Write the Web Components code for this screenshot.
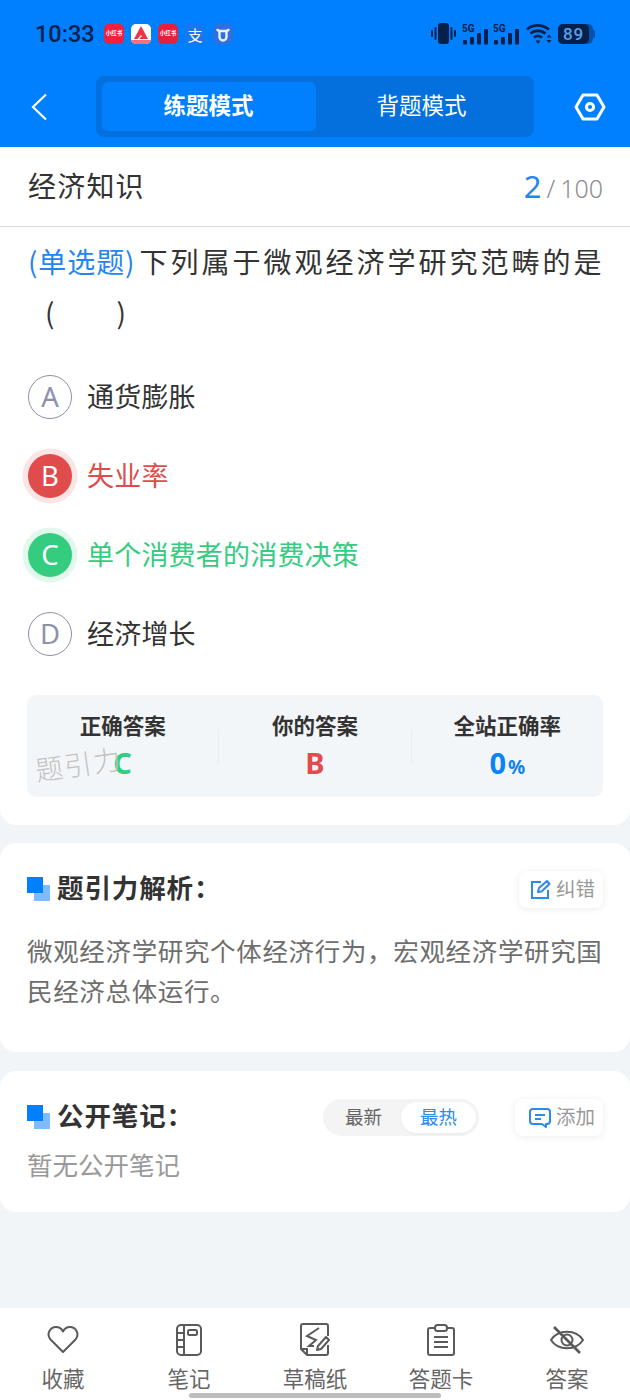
<!DOCTYPE html>
<html lang="zh"><head><meta charset="utf-8"><title>练题</title>
<style>
html,body{margin:0;padding:0}
body{width:630px;height:1400px;overflow:hidden;background:#f1f5f8;font-family:"Noto Sans CJK SC","Noto Sans",sans-serif;color:#333}
#page{display:flex;flex-direction:column;height:1400px;position:relative}
</style></head><body>
<div id="page">
<app-header></app-header>
<question-card></question-card>
<info-card style="margin-top:18px;height:209px" heading="题引力解析&#xFF1A;" action="纠错" icon="edit">
  <div style="font-size:25.5px;line-height:40px;color:#6e6e6e;letter-spacing:.66px;margin-top:23px">微观经济学研究个体经济行为&#xFF0C;宏观经济学研究国民经济总体运行。</div>
</info-card>
<info-card style="margin-top:19px;height:141px" heading="公开笔记&#xFF1A;" action="添加" icon="comment" sort>
  <div style="font-size:25.5px;line-height:36px;color:#999;margin-top:11px">暂无公开笔记</div>
</info-card>
<tab-bar></tab-bar>
</div>
<script>
class AppHeader extends HTMLElement{constructor(){super();this.attachShadow({mode:'open'}).innerHTML=`
<style>
:host{display:block;height:147px;background:#007fff;flex:none;position:relative}
.status{height:66px;box-sizing:border-box;padding:23px 35px 0 35px;display:flex;align-items:flex-start;justify-content:space-between}
.left{display:flex;align-items:center;gap:7px}
.time{font:500 23.5px/22px Roboto,sans-serif;color:#05204a;margin-right:2px;width:60px}
.app{width:20px;height:20px;border-radius:5px;display:flex;align-items:center;justify-content:center;color:#fff;font:700 5.5px/1 "Noto Sans CJK SC",sans-serif;overflow:hidden;white-space:nowrap}
.right{display:flex;align-items:center;gap:5px;height:22px}
.nav{display:flex;align-items:center;height:61px;margin-top:10px;padding:0 24px 0 29px;justify-content:space-between}
.seg{width:438px;height:61px;box-sizing:border-box;background:#0370dd;border-radius:8px;padding:6px;display:flex;margin-left:6px}
.seg div{flex:1;display:flex;align-items:center;justify-content:center;font-size:22.5px;color:#fff;border-radius:6px;padding-bottom:5px;box-sizing:border-box}
.seg .on{flex:none;width:214px;background:#007fff;font-weight:700}
svg{display:block}
</style>
<div class="status"><div class="left"><span class="time">10:33</span>
<span class="app" style="background:#f0203e">小红书</span>
<span class="app" style="background:#fff"><svg width="20" height="20" viewBox="0 0 20 20"><path d="M10 2 3 15h3.500L10 11l1.500 1.500H10L8.500 15H17z" fill="#ee3344"/><path d="M0 16h20v4H0z" fill="#f5707a"/></svg></span>
<span class="app" style="background:#e5203c">小红书</span>
<span class="app" style="background:#1876f0;font:400 15px/1 'Noto Sans CJK SC',sans-serif">支</span>
<span class="app" style="background:#2f6fe0;margin-left:1px"><svg width="14" height="15" viewBox="0 0 14 15"><path d="M1 2c1 2 2 2 6 2s5 0 6-2M3.500 4v6a3.500 3.500 0 0 0 7 0V4" fill="none" stroke="#e8f2ff" stroke-width="2.400"/></svg></span>
</div>
<div class="right">
<svg width="27" height="22" viewBox="0 0 27 22" fill="#05204a"><rect x="8" y="0" width="11" height="21" rx="3"/><rect x="1" y="7" width="2" height="7" rx="1"/><rect x="4.500" y="4" width="2" height="13" rx="1"/><rect x="20.500" y="4" width="2" height="13" rx="1"/><rect x="24" y="7" width="2" height="7" rx="1"/></svg>
<svg width="26" height="22" viewBox="0 0 26 22" fill="#05204a"><text x="0" y="8.500" font-family="Roboto,sans-serif" font-size="10" font-weight="700">5G</text><rect x="1" y="17" width="4" height="4.500" rx="1"/><rect x="8" y="14" width="4" height="7.500" rx="1"/><rect x="15" y="10" width="4" height="11.500" rx="1"/><rect x="22" y="6" width="4" height="15.500" rx="1"/></svg>
<svg width="26" height="22" viewBox="0 0 26 22" fill="#05204a"><text x="0" y="8.500" font-family="Roboto,sans-serif" font-size="10" font-weight="700">5G</text><rect x="1" y="17" width="4" height="4.500" rx="1"/><rect x="8" y="14" width="4" height="7.500" rx="1"/><rect x="15" y="10" width="4" height="11.500" rx="1"/><rect x="22" y="6" width="4" height="15.500" rx="1"/></svg>
<svg width="27" height="22" viewBox="0 0 27 22" fill="none" stroke="#05204a" stroke-width="2.800" style="margin-left:2px"><path d="M1 6.500c6-5.500 15-5.500 22 0M4.500 10.500c4.500-3.500 10-3.500 15 0M8 14.500c2.500-2 5.500-2 8 0"/><path d="M9.500 17.500h5L12 21z" fill="#05204a" stroke="none"/><path d="M20.500 14.500l2.500-3 2.500 3zM20.500 17l2.500 3 2.500-3z" fill="#05204a" stroke="none"/></svg>
<svg width="37" height="22" viewBox="0 0 37 22"><rect x="0" y="1" width="35" height="20" rx="5" fill="#0a2f63" opacity=".55"/><rect x="0" y="1" width="31" height="20" rx="5" fill="#05204a"/><rect x="35" y="7" width="2" height="8" rx="1" fill="#0a2f63" opacity=".55"/><text x="15.500" y="17" text-anchor="middle" font-family="Roboto,sans-serif" font-size="17" font-weight="500" fill="#5aa0ea" letter-spacing=".8">89</text></svg>
</div></div>
<div class="nav">
<svg width="20" height="28" viewBox="0 0 20 28"><path d="M17 1.500 4 14l13 12.500" fill="none" stroke="#fff" stroke-width="2.200"/></svg>
<div class="seg"><div class="on">练题模式</div><div>背题模式</div></div>
<svg width="32" height="28" viewBox="0 0 32 28" fill="none" stroke="#fff" stroke-width="3"><path d="M9 2h14l7 12-7 12H9L2 14z" stroke-linejoin="round"/><circle cx="16" cy="14" r="3.600"/></svg>
</div>`}}
customElements.define('app-header',AppHeader);

class OptionRow extends HTMLElement{constructor(){super();const s=this.getAttribute('state')||'';const c={wrong:'#e04c4c',right:'#34cd7f'}[s];
this.attachShadow({mode:'open'}).innerHTML=`
<style>
:host{display:flex;align-items:center;height:79px;gap:15px}
.b{width:44px;height:44px;flex:none;box-sizing:border-box;border-radius:50%;display:flex;align-items:center;justify-content:center;font:400 27.5px/1 "Noto Sans",sans-serif;
 ${c?`background:${c};color:#fff;box-shadow:0 0 0 5.500px ${c}26;`:`border:1.500px solid #8c91ab;color:#8c91ab;`}}
.t{font-size:27px;color:${c||'#333'};letter-spacing:.2px;padding-bottom:3px}
</style><span class="b">${this.getAttribute('letter')}</span><span class="t"><slot></slot></span>`}}
customElements.define('option-row',OptionRow);

class SummaryCell extends HTMLElement{constructor(){super();this.attachShadow({mode:'open'}).innerHTML=`
<style>
:host{flex:1;display:flex;flex-direction:column;align-items:center}
.l{font-size:21.5px;font-weight:700;color:#333;line-height:30px;margin-top:15px}
.v{font:700 29px/36px "Noto Sans",sans-serif;color:${this.getAttribute('color')};margin-top:5px}
::slotted(small){font-size:19px;margin-left:2px}
</style><div class="l">${this.getAttribute('label')}</div><div class="v"><slot></slot></div>`}}
customElements.define('summary-cell',SummaryCell);

class QuestionCard extends HTMLElement{constructor(){super();this.attachShadow({mode:'open'}).innerHTML=`
<style>
:host{display:block;background:#fff;height:678px;flex:none;border-radius:0 0 16px 16px;position:relative}
.top{height:79px;border-bottom:1px solid #dcdcdc;display:flex;align-items:center;justify-content:space-between;padding:0 27px 0 28px}
.title{font-size:28px;letter-spacing:1.2px;color:#333;line-height:1;margin-top:-4px}
.cnt{font:300 25px/1 "Noto Sans",sans-serif;color:#8d8d8d;display:flex;align-items:baseline}
.cnt b{font:400 31px/1 "Noto Sans",sans-serif;color:#1f86f2}
.cnt i{font-style:normal;margin:0 5px 0 5px}
.q{padding:9px 0 0 28px;font-size:28px;line-height:51px;letter-spacing:3px;color:#333;white-space:nowrap}
.q em{font-style:normal;color:#1f86f2;letter-spacing:.9px;margin-right:4px}
.q .p{padding-left:17px}
.q .p span{display:inline-block;width:59px}
.opts{padding:19px 27px 0 28px}
.box{margin:22px 27px 0;height:102px;background:#f3f6f9;border-radius:9px;display:flex;position:relative}
.sep{width:1px;height:34px;background:#eaedf0;align-self:center;margin-top:2px}
.wm{position:absolute;left:35px;top:603px;transform:rotate(-8deg);font-size:27.5px;font-weight:300;line-height:1;letter-spacing:1.5px;color:#c2c2c2;pointer-events:none}
</style>
<div class="top"><span class="title">经济知识</span><span class="cnt"><b>2</b><i>/</i>100</span></div>
<div class="q"><em>(单选题)</em>下列属于微观经济学研究范畴的是<br><span class="p">(<span></span>)</span></div>
<div class="opts">
<option-row letter="A">通货膨胀</option-row>
<option-row letter="B" state="wrong">失业率</option-row>
<option-row letter="C" state="right">单个消费者的消费决策</option-row>
<option-row letter="D">经济增长</option-row>
</div>
<div class="box">
<summary-cell label="正确答案" color="#34cd7f">C</summary-cell><span class="sep"></span>
<summary-cell label="你的答案" color="#e04c4c">B</summary-cell><span class="sep"></span>
<summary-cell label="全站正确率" color="#0a84f5">0<small>%</small></summary-cell>
</div>
<div class="wm">题引力</div>`}}
customElements.define('question-card',QuestionCard);

const ICONS={edit:`<svg width="21" height="21" viewBox="0 0 21 21" fill="none" stroke="#2a8af0" stroke-width="2"><path d="M11 3H2v16h16v-8"/><path d="M8 13l1-4 8-7 2.500 3-8 7.500z" stroke-linejoin="round"/></svg>`,
comment:`<svg width="22" height="21" viewBox="0 0 22 21" fill="none" stroke="#2a8af0" stroke-width="2"><path d="M4 2h14a3 3 0 0 1 3 3v9a3 3 0 0 1-3 3h-1v3l-4-3H4a3 3 0 0 1-3-3V5a3 3 0 0 1 3-3z" stroke-linejoin="round"/><path d="M6 8h10M6 12h6"/></svg>`};
class InfoCard extends HTMLElement{constructor(){super();const sort=this.hasAttribute('sort');this.attachShadow({mode:'open'}).innerHTML=`
<style>
:host{display:block;background:#fff;border-radius:16px;flex:none;box-sizing:border-box;padding:28px 27px 0 27px}
.h{display:flex;align-items:center;height:36px}
.mark{position:relative;width:23px;height:24px;flex:none;margin-right:7px}
.mark i{position:absolute;display:block;width:16px;height:16px}
.mark i:first-child{left:7px;top:8px;background:#7dbcff}
.mark i:last-child{left:0;top:0;background:#007fff}
.t{font-size:26.5px;font-weight:700;color:#333;letter-spacing:.9px;flex:1;padding-bottom:5px}
.sort{display:flex;align-items:center;width:156px;height:37px;box-sizing:border-box;background:#f4f4f4;border-radius:19px;padding:3px;margin-right:36px;font-size:18.500px;color:#666}
.sort span{flex:1;text-align:center;padding-bottom:2px}
.sort .on{flex:none;width:75px;height:31px;line-height:29px;box-sizing:border-box;background:#fff;border-radius:16px;color:#2a8af0;box-shadow:0 1px 3px #0000000d}
.a{display:flex;align-items:center;gap:5px;height:37px;padding:0 8px 0 ${sort?14:11}px;border-radius:8px;background:#fff;box-shadow:0 1px 7px #00000014;font-size:19.500px;color:#999}
.a b{font-weight:400;padding-bottom:3px}
</style>
<div class="h"><span class="mark"><i></i><i></i></span><span class="t">${this.getAttribute('heading')}</span>
${sort?'<div class="sort"><span>最新</span><span class="on">最热</span></div>':''}
<span class="a">${ICONS[this.getAttribute('icon')]}<b>${this.getAttribute('action')}</b></span></div>
<slot></slot>`}}
customElements.define('info-card',InfoCard);

class TabItem extends HTMLElement{constructor(){super();this.attachShadow({mode:'open'}).innerHTML=`
<style>
:host{flex:1;display:flex;flex-direction:column;align-items:center}
.i{height:38px;margin-top:13px;display:flex;align-items:center;justify-content:center}
.l{font-size:21.5px;line-height:28px;color:#666;margin-top:5px}
svg{display:block}
</style><div class="i"><slot></slot></div><div class="l">${this.getAttribute('label')}</div>`}}
customElements.define('tab-item',TabItem);

class TabBar extends HTMLElement{constructor(){super();const st='fill="none" stroke="#5a5a5a" stroke-width="2"';this.attachShadow({mode:'open'}).innerHTML=`
<style>
:host{display:flex;height:92px;background:#fff;position:absolute;left:0;right:0;bottom:0;box-sizing:border-box}
.home{position:absolute;left:189px;width:252px;height:5px;bottom:2px;background:#bdbdbd;border-radius:3px}
</style>
<tab-item label="收藏"><svg width="32" height="30" viewBox="0 0 32 30" ${st}><path d="M16 27 3.500 14.500C-1 9 3 2 9 2c3 0 5.500 1.500 7 4.500C17.500 3.500 20 2 23 2c6 0 10 7 5.500 12.500z" stroke-linejoin="round"/></svg></tab-item>
<tab-item label="笔记"><svg width="26" height="32" viewBox="0 0 26 32" ${st}><rect x="1" y="1" width="24" height="30" rx="4"/><path d="M8 1v30M1 9h7M1 16h7M1 23h7"/><rect x="12" y="6" width="9" height="5" rx="1.500"/></svg></tab-item>
<tab-item label="草稿纸"><svg width="30" height="34" viewBox="0 0 30 34" ${st}><path d="M28 13V3a2 2 0 0 0-2-2H3a2 2 0 0 0-2 2v23l6 6h19a2 2 0 0 0 2-2v-8M1 26h6v6"/><path d="M19 5 7 13l9 4-7 6h5"/><path d="M18 23l-1 4 4-1 8-9-3-3z" stroke-linejoin="round"/></svg></tab-item>
<tab-item label="答题卡"><svg width="28" height="32" viewBox="0 0 28 32" ${st}><path d="M8 4H3a2 2 0 0 0-2 2v23a2 2 0 0 0 2 2h22a2 2 0 0 0 2-2V6a2 2 0 0 0-2-2h-5"/><rect x="8" y="1" width="12" height="6" rx="2.500"/><path d="M7 13h14M7 18h14M7 23h14"/></svg></tab-item>
<tab-item label="答案"><svg width="36" height="30" viewBox="0 0 36 30" ${st}><path d="M2 15C9 4 27 4 34 15 27 26 9 26 2 15z"/><circle cx="18" cy="15" r="5.500"/><path d="M5 2l26 26" stroke-width="2.600"/></svg></tab-item>
<span class="home"></span>`}}
customElements.define('tab-bar',TabBar);
</script>
</body></html>
